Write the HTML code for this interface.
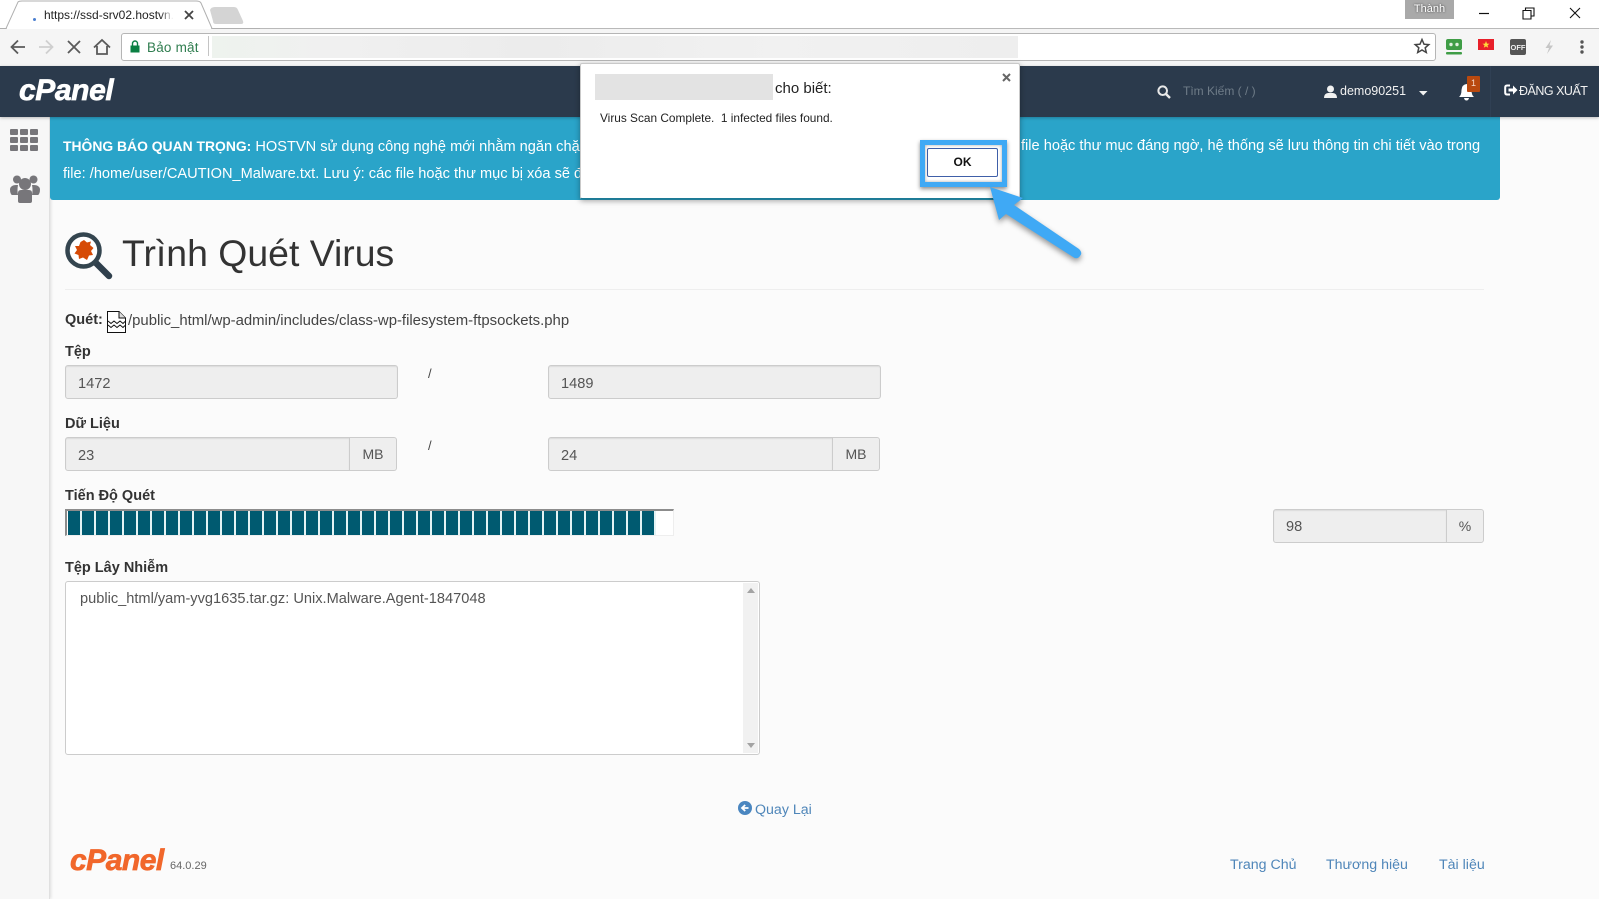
<!DOCTYPE html>
<html lang="vi">
<head>
<meta charset="utf-8">
<title>Trình Quét Virus</title>
<style>
html,body{margin:0;padding:0;width:1599px;height:899px;overflow:hidden;background:#fbfbfb;font-family:"Liberation Sans","DejaVu Sans",sans-serif;color:#333}
*{box-sizing:border-box}
.a{position:absolute;white-space:nowrap}
.l{font-weight:bold;font-size:14.500px;color:#333;line-height:18px;height:18px}
.inp{background:#eee;border:1px solid #ccc;border-radius:3px;box-shadow:inset 0 1px 1px rgba(0,0,0,.08);color:#555;font-size:14.600px;padding-left:12px;line-height:32px}
.add{background:#eee;border:1px solid #ccc;border-left:0;border-radius:0 3px 3px 0;color:#555;font-size:14px;text-align:center;line-height:32px}
.lnk{color:#4f86b9;font-size:14.200px;line-height:20px}
.bn{font-size:14.600px;line-height:20px;color:#fff}
.bn b{font-size:13.900px}
svg{position:absolute;display:block;overflow:visible}
</style>
</head>
<body>
<!-- browser chrome -->
<div class="a" style="left:0;top:0;width:1599px;height:29px;background:#fff;border-bottom:1px solid #b9b9b9"></div>
<svg style="left:0;top:0" width="260" height="30"><path d="M0 28.5H6L18 2Q19 1 22 1H196Q200 1 201 3L212 28.5H260" fill="#fff" stroke="#b0b0b0"/><path d="M7 29H211" stroke="#fff" stroke-width="2"/><path d="M210 10Q211 7 215 7H234Q237 7 238 10L243 21Q244 24 241 24H216Q213 24 213 21Z" fill="#d4d4d4"/></svg>
<div class="a" style="left:33px;top:18px;width:3px;height:3px;border-radius:50%;background:#4a7fd0"></div>
<div class="a" style="left:44px;top:7px;width:132px;height:16px;overflow:hidden;font-size:12px;line-height:16px;color:#222;-webkit-mask-image:linear-gradient(90deg,#000 88%,transparent 98%);mask-image:linear-gradient(90deg,#000 88%,transparent 98%)">https://ssd-srv02.hostvn.</div>
<svg style="left:184px;top:10px" width="10" height="10"><path d="M1 1L9 9M9 1L1 9" stroke="#444" stroke-width="1.8"/></svg>
<div class="a" style="left:1405px;top:0;width:49px;height:19px;background:#a9a9a9;color:#fff;font-size:11px;line-height:19px;text-align:center;text-shadow:0 0 2px #333">Thành</div>
<svg style="left:1478px;top:6px" width="110" height="16"><path d="M1 7.5H11" stroke="#111" stroke-width="1.2"/><path d="M45 4.5H53V13H45ZM47.500 4.500V2H56V10H53" fill="none" stroke="#111" stroke-width="1.1"/><path d="M92 2L102 12M102 2L92 12" stroke="#111" stroke-width="1.1"/></svg>

<div class="a" style="left:0;top:29px;width:1599px;height:37px;background:#f5f5f5"></div>
<svg style="left:8px;top:37px" width="110" height="20"><path d="M17 10H4M10 3.500L3.500 10L10 16.500" fill="none" stroke="#5a5a5a" stroke-width="1.8"/><path d="M31 10H44M38 3.500L44.500 10L38 16.500" fill="none" stroke="#cfcfcf" stroke-width="1.8"/><path d="M60 4L72 16M72 4L60 16" stroke="#5a5a5a" stroke-width="1.8"/><path d="M86 10.500L94 3L102 10.500M89 9V17H99V9" fill="none" stroke="#5a5a5a" stroke-width="1.8"/></svg>
<div class="a" style="left:121px;top:33px;width:1315px;height:28px;background:#fff;border:1px solid #b5b5b5;border-radius:3px"></div>
<svg style="left:130px;top:40px" width="10" height="13"><path d="M2.500 6V3.500a2.500 2.500 0 0 1 5 0V6" fill="none" stroke="#0b8043" stroke-width="1.400"/><rect x="0.500" y="5.500" width="9" height="7" fill="#0b8043"/></svg>
<div class="a" style="left:147px;top:39px;font-size:13.500px;line-height:18px;color:#2f7d4f;letter-spacing:.2px">Bảo mật</div>
<div class="a" style="left:208px;top:36px;width:1px;height:20px;background:#c4c4c4"></div>
<div class="a" style="left:212px;top:36px;width:806px;height:22px;background:linear-gradient(90deg,#eef3ee,#f0f0f0 15%,#ececec 40%,#f1f1f1 70%,#eee 100%)"></div>
<svg style="left:1414px;top:38px" width="16" height="16"><path d="M8 1.500L10 6.200L14.800 6.600L11.200 9.800L12.300 14.500L8 12L3.700 14.500L4.800 9.800L1.200 6.600L6 6.200Z" fill="none" stroke="#444" stroke-width="1.500"/></svg>
<svg style="left:1446px;top:39px" width="150" height="17">
 <rect x="0" y="0" width="16" height="11" rx="2" fill="#3f9d46"/><circle cx="5" cy="5.500" r="1.700" fill="#dff0df"/><circle cx="11" cy="5.500" r="1.700" fill="#dff0df"/><rect x="0" y="13" width="16" height="2.500" rx="1" fill="#3f9d46"/>
 <rect x="32" y="0" width="16" height="11" fill="#e8202a"/><path d="M40 2L41 4.600L43.500 4.700L41.500 6.300L42.200 8.800L40 7.400L37.800 8.800L38.500 6.300L36.500 4.700L39 4.600Z" fill="#ffd83a"/>
 <rect x="64" y="0" width="16" height="16" rx="2" fill="#555"/>
 <text x="72" y="11" font-family="Liberation Sans,sans-serif" font-size="7.500" font-weight="bold" fill="#eee" text-anchor="middle">OFF</text>
 <path d="M105 1L99.500 9H103L101 15L107 6.500H103.500Z" fill="#c6c6c6"/>
 <circle cx="136" cy="3" r="1.700" fill="#555"/><circle cx="136" cy="8" r="1.700" fill="#555"/><circle cx="136" cy="13" r="1.700" fill="#555"/>
</svg>

<!-- sidebar -->
<div class="a" style="left:0;top:117px;width:50px;height:782px;background:#f7f7f7;border-right:1px solid #e0e0e0;box-shadow:1px 0 3px rgba(0,0,0,.12)"></div>
<svg style="left:10px;top:129px" width="30" height="23" fill="#77767a"><rect x="0" y="0" width="8" height="6" rx="1"/><rect x="10" y="0" width="8" height="6" rx="1"/><rect x="20" y="0" width="8" height="6" rx="1"/><rect x="0" y="8" width="8" height="6" rx="1"/><rect x="10" y="8" width="8" height="6" rx="1"/><rect x="20" y="8" width="8" height="6" rx="1"/><rect x="0" y="16" width="8" height="6" rx="1"/><rect x="10" y="16" width="8" height="6" rx="1"/><rect x="20" y="16" width="8" height="6" rx="1"/></svg>
<svg style="left:10px;top:174px" width="30" height="30" fill="#77767a"><circle cx="7" cy="5.500" r="4"/><circle cx="23.500" cy="5.500" r="4"/><circle cx="15" cy="10" r="6"/><path d="M0 15Q1 11 6 11L8 11Q7 16 8 21H2Q0 20 0 15ZM30 15Q29 11 24 11L22 11Q23 16 22 21H28Q30 20 30 15Z"/><path d="M8 19Q8 16 11 16H19Q22 16 22 19V27Q22 29 20 29H10Q8 29 8 27Z"/></svg>

<!-- banner -->
<div class="a" style="left:50px;top:117px;width:1450px;height:83px;background:#2aa4c9;border-radius:0 0 3px 3px"></div>
<div class="a bn" style="left:63px;top:136px"><b>THÔNG BÁO QUAN TRỌNG:</b> HOSTVN sử dụng công nghệ mới nhằm ngăn chặn</div>
<div class="a bn" style="left:63px;top:164px">file: /home/user/CAUTION_Malware.txt. Lưu ý: các file hoặc thư mục bị xóa sẽ được</div>
<div class="a bn" style="left:1021px;top:136px">file hoặc thư mục đáng ngờ, hệ thống sẽ lưu thông tin chi tiết vào trong</div>

<!-- cpanel nav -->
<div class="a" style="left:0;top:66px;width:1599px;height:51px;background:#2b3a4c;box-shadow:0 1px 3px rgba(0,0,0,.25)"></div>
<div class="a" style="left:19px;top:75px;font-size:30px;line-height:32px;font-weight:bold;font-style:italic;color:#fff;-webkit-text-stroke:.7px #fff;letter-spacing:-.4px">cPanel</div>
<svg style="left:1157px;top:85px" width="14" height="14"><circle cx="5.700" cy="5.700" r="4.300" fill="none" stroke="#e8e8e8" stroke-width="2"/><path d="M9 9L13 13" stroke="#e8e8e8" stroke-width="2.400"/></svg>
<div class="a" style="left:1183px;top:83px;font-size:12px;line-height:17px;color:#6f7c88">Tìm Kiếm ( / )</div>
<svg style="left:1324px;top:85px" width="13" height="13" fill="#f1f1f1"><circle cx="6.500" cy="4" r="3.500"/><path d="M0 13Q0 8.500 4 8H9Q13 8.500 13 13Z"/></svg>
<div class="a" style="left:1340px;top:83px;font-size:12.500px;line-height:17px;color:#f1f1f1">demo90251</div>
<svg style="left:1419px;top:91px" width="9" height="5"><path d="M0 0H8.500L4.250 4.500Z" fill="#f1f1f1"/></svg>
<svg style="left:1458px;top:83px" width="17" height="18" fill="#fff"><path d="M8.500 1Q13 1.500 13.500 7Q13.500 12 16 14H1Q3.500 12 3.500 7Q4 1.500 8.500 1Z"/><path d="M6 15H11Q10.500 17.500 8.500 17.500Q6.500 17.500 6 15Z"/></svg>
<div class="a" style="left:1467px;top:76px;width:13px;height:16px;background:#b9490f;color:#f5d8c8;font-size:9px;line-height:15px;text-align:center;border-radius:1px">1</div>
<div class="a" style="left:1490px;top:66px;width:1px;height:51px;background:#304054"></div>
<svg style="left:1504px;top:84px" width="14" height="12"><path d="M6 1.500H3Q1.200 1.500 1.200 3.500V8.500Q1.200 10.500 3 10.500H6" fill="none" stroke="#fff" stroke-width="2"/><path d="M4.500 4.500H9V1.500L13.500 6L9 10.500V7.500H4.500Z" fill="#fff"/></svg>
<div class="a" style="left:1519px;top:83px;font-size:12.500px;line-height:17px;color:#f1f1f1;letter-spacing:-.5px">ĐĂNG XUẤT</div>

<!-- heading -->
<svg style="left:65px;top:232px" width="50" height="50"><path d="M31 31L44 44" stroke="#2f3f4c" stroke-width="6.500" stroke-linecap="round"/><circle cx="18.500" cy="18.500" r="16" fill="#fff" stroke="#34454f" stroke-width="4.500"/><path d="M19 8L22 10.500L26 9.500L25 13L28.500 16L26 19L28 23L24 23.500L22 28L18 25.500L14 27L13.500 23L9.500 21.500L12 18L10 14L14 14L15.500 10Z" fill="#d64a05"/></svg>
<div class="a" style="left:122px;top:230px;font-size:37.400px;line-height:46px;color:#333">Trình Quét Virus</div>
<div class="a" style="left:65px;top:289px;width:1419px;height:1px;background:#eee"></div>

<div class="a l" style="left:65px;top:311px">Quét:</div>
<svg style="left:107px;top:311px" width="19" height="22"><path d="M.5.500H12L18.500 7V21.500H.5Z" fill="#fff" stroke="#111"/><path d="M12 .5V7H18.500" fill="#ddd" stroke="#111"/><path d="M1 10L4 12.500L7 10L10 12.500L13 10L16 12.500L18 10.500M1 14L4 16.500L7 14L10 16.500L13 14L16 16.500L18 14.500" fill="none" stroke="#111"/></svg>
<div class="a" style="left:128px;top:312px;font-size:14.900px;line-height:18px;color:#444">/public_html/wp-admin/includes/class-wp-filesystem-ftpsockets.php</div>

<!-- Tệp -->
<div class="a l" style="left:65px;top:343px">Tệp</div>
<div class="a inp" style="left:65px;top:365px;width:333px;height:34px;line-height:36px">1472</div>
<div class="a" style="left:428px;top:365px;font-size:13px;line-height:18px;color:#444">/</div>
<div class="a inp" style="left:548px;top:365px;width:333px;height:34px;line-height:36px">1489</div>

<!-- Dữ liệu -->
<div class="a l" style="left:65px;top:415px">Dữ Liệu</div>
<div class="a inp" style="left:65px;top:437px;width:285px;height:34px;border-radius:3px 0 0 3px;line-height:36px">23</div>
<div class="a add" style="left:350px;top:437px;width:47px;height:34px">MB</div>
<div class="a" style="left:428px;top:437px;font-size:13px;line-height:18px;color:#444">/</div>
<div class="a inp" style="left:548px;top:437px;width:285px;height:34px;border-radius:3px 0 0 3px;line-height:36px">24</div>
<div class="a add" style="left:833px;top:437px;width:47px;height:34px">MB</div>

<!-- Tiến độ -->
<div class="a l" style="left:65px;top:487px">Tiến Độ Quét</div>
<div class="a" style="left:65px;top:509px;width:609px;height:27px;background:#fff;border:1px solid #eee;border-top:2px solid #8c8c8c;border-left:2px solid #8c8c8c"></div>
<div class="a" style="left:68px;top:511px;width:588px;height:24px;background:repeating-linear-gradient(90deg,#005a70 0,#005a70 12px,#e3f3f4 12px,#e3f3f4 14px)"></div>
<div class="a inp" style="left:1273px;top:509px;width:174px;height:34px;border-radius:3px 0 0 3px;line-height:34px">98</div>
<div class="a add" style="left:1446px;top:509px;width:38px;height:34px;border-left:1px solid #ccc">%</div>

<!-- Tệp lây nhiễm -->
<div class="a l" style="left:65px;top:559px">Tệp Lây Nhiễm</div>
<div class="a" style="left:65px;top:581px;width:695px;height:174px;background:#fff;border:1px solid #ccc;border-radius:3px"></div>
<div class="a" style="left:743px;top:583px;width:15px;height:170px;background:#f1f1f1"></div>
<svg style="left:747px;top:587px" width="8" height="162"><path d="M0 6L4 1L8 6Z" fill="#a3a3a3"/><path d="M0 156H8L4 161Z" fill="#a3a3a3"/></svg>
<div class="a" style="left:80px;top:590px;font-size:14.600px;line-height:18px;color:#555">public_html/yam-yvg1635.tar.gz: Unix.Malware.Agent-1847048</div>

<!-- back -->
<svg style="left:738px;top:801px" width="14" height="14"><circle cx="7" cy="7" r="7" fill="#4a86c0"/><path d="M10.500 7H4.500M7.200 4L4 7L7.200 10" fill="none" stroke="#fff" stroke-width="1.800"/></svg>
<div class="a lnk" style="left:755px;top:800px">Quay Lại</div>

<!-- footer -->
<div class="a" style="left:70px;top:845px;font-size:30px;line-height:32px;font-weight:bold;font-style:italic;color:#f1672b;-webkit-text-stroke:.7px #f1672b;letter-spacing:-.5px">cPanel</div>
<div class="a" style="left:170px;top:858px;font-size:11px;line-height:16px;color:#666">64.0.29</div>
<div class="a lnk" style="left:1230px;top:855px">Trang Chủ</div>
<div class="a lnk" style="left:1326px;top:855px">Thương hiệu</div>
<div class="a lnk" style="left:1439px;top:855px">Tài liệu</div>

<!-- dialog -->
<div class="a" style="left:580px;top:63px;width:440px;height:136px;background:#fff;border:1px solid #c9c9c9;border-bottom:1px solid #1c7b96;border-radius:2px;box-shadow:0 2px 6px rgba(0,0,0,.35)"></div>
<div class="a" style="left:595px;top:74px;width:178px;height:26px;background:#e3e3e3"></div>
<div class="a" style="left:775px;top:80px;font-size:15px;line-height:18px;color:#222">cho biết:</div>
<svg style="left:1002px;top:73px" width="9" height="9"><path d="M1 1L8 8M8 1L1 8" stroke="#666" stroke-width="2"/></svg>
<div class="a" style="left:600px;top:110px;font-size:11.850px;line-height:16px;color:#222;white-space:pre">Virus Scan Complete.  1 infected files found.</div>
<div class="a" style="left:927px;top:148px;width:71px;height:29px;background:#fff;border:1px solid #3f5fa8;border-radius:2px;font-size:12px;font-weight:bold;line-height:27px;text-align:center;color:#111">OK</div>
<div class="a" style="left:920px;top:140px;width:87px;height:47px;border:5px solid #3fa9f5;box-shadow:0 2px 4px rgba(0,0,0,.45),inset 0 0 3px rgba(0,0,0,.35)"></div>
<svg style="left:985px;top:185px" width="110" height="80"><g style="filter:drop-shadow(0 3px 3px rgba(0,0,0,.4))"><path d="M5 2L38 13L29 20L94 64Q98 68 95 71Q92 75 88 72L21 29L14 35Z" fill="#3fa9f5"/></g></svg>
</body>
</html>
